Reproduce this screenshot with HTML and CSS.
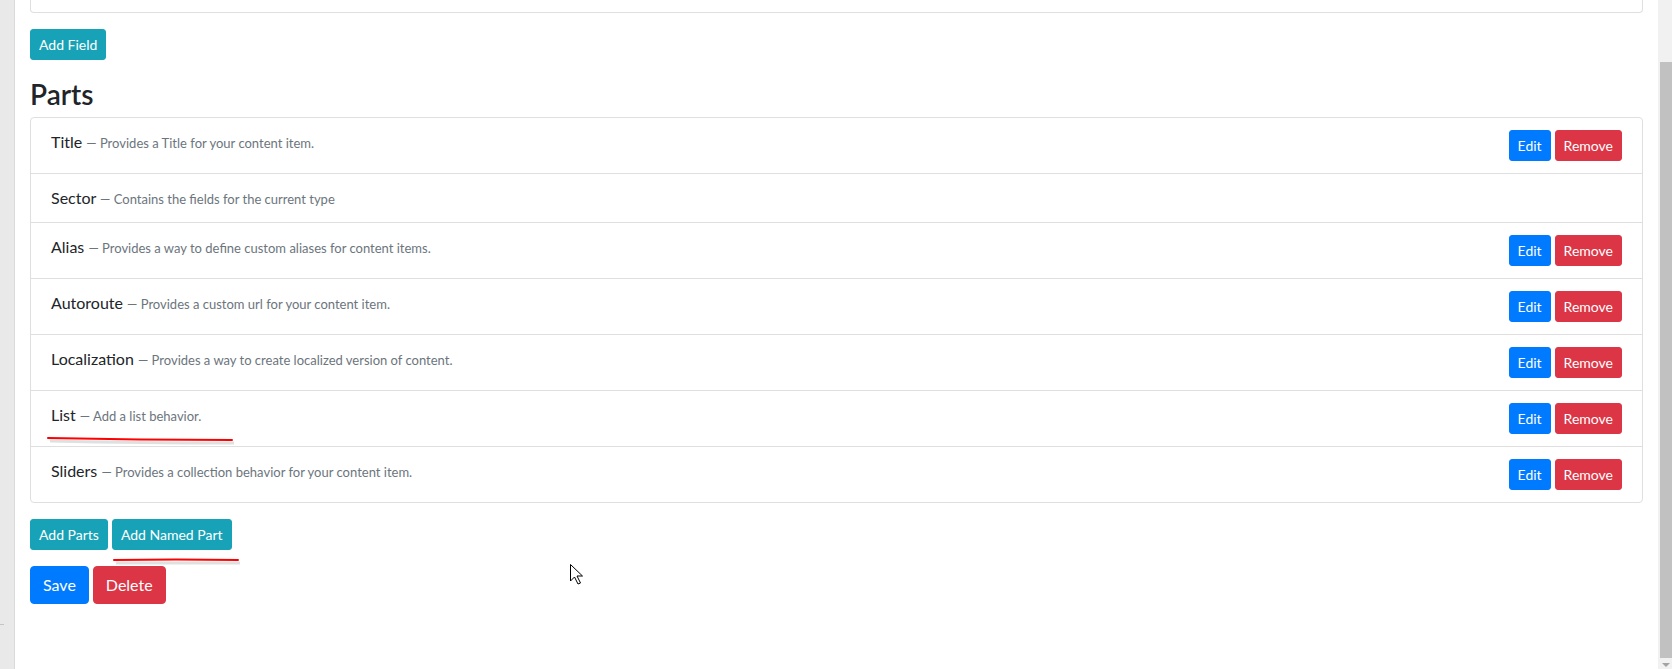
FILE: index.html
```html
<!DOCTYPE html>
<html lang="en">
<head>
    <meta charset="UTF-8">
    <meta name="viewport" content="width=device-width, initial-scale=1.0">
    <title>Edit Content Type</title>
    <link rel="stylesheet" href="styles.css">
</head>
<body>
    <div class="page">
        <div class="side-strip"><span class="tick"></span></div>

        <div class="content">
            <div class="card-cut"></div>

            <button class="btn btn-sm btn-info add-field">Add Field</button>

            <h3>Parts</h3>
            <ul class="list-group">
                <li class="part-row">
                    <div class="part-name">Title <small>— Provides a Title for your content item.</small></div>
                    <div class="part-actions">
                        <button class="btn btn-sm btn-primary">Edit</button>
                        <button class="btn btn-sm btn-danger">Remove</button>
                    </div>
                </li>
                <li class="part-row">
                    <div class="part-name">Sector <small>— Contains the fields for the current type</small></div>
                </li>
                <li class="part-row">
                    <div class="part-name">Alias <small>— Provides a way to define custom aliases for content items.</small></div>
                    <div class="part-actions">
                        <button class="btn btn-sm btn-primary">Edit</button>
                        <button class="btn btn-sm btn-danger">Remove</button>
                    </div>
                </li>
                <li class="part-row">
                    <div class="part-name">Autoroute <small>— Provides a custom url for your content item.</small></div>
                    <div class="part-actions">
                        <button class="btn btn-sm btn-primary">Edit</button>
                        <button class="btn btn-sm btn-danger">Remove</button>
                    </div>
                </li>
                <li class="part-row">
                    <div class="part-name">Localization <small>— Provides a way to create localized version of content.</small></div>
                    <div class="part-actions">
                        <button class="btn btn-sm btn-primary">Edit</button>
                        <button class="btn btn-sm btn-danger">Remove</button>
                    </div>
                </li>
                <li class="part-row">
                    <div class="part-name">List <small>— Add a list behavior.</small></div>
                    <div class="part-actions">
                        <button class="btn btn-sm btn-primary">Edit</button>
                        <button class="btn btn-sm btn-danger">Remove</button>
                    </div>
                </li>
                <li class="part-row">
                    <div class="part-name">Sliders <small>— Provides a collection behavior for your content item.</small></div>
                    <div class="part-actions">
                        <button class="btn btn-sm btn-primary">Edit</button>
                        <button class="btn btn-sm btn-danger">Remove</button>
                    </div>
                </li>
            </ul>

            <div class="actions">
                <button class="btn btn-sm btn-info">Add Parts</button>
                <button class="btn btn-sm btn-info">Add Named Part</button>
            </div>

            <div class="actions">
                <button class="btn btn-primary">Save</button>
                <button class="btn btn-danger">Delete</button>
            </div>
        </div>

        <div class="scrollbar">
            <div class="track-top"></div>
            <div class="thumb"></div>
            <div class="arrow-down"></div>
        </div>

        <!-- hand drawn marks and the mouse pointer from the screenshot -->
        <svg class="overlay" width="1672" height="669" viewBox="0 0 1672 669">
            <path d="M50 441 Q 140 443 234 443" stroke="#000" stroke-opacity="0.12" stroke-width="3" fill="none"/>
            <path d="M48 438 Q 140 440 232 440" stroke="#f00" stroke-width="2" fill="none" stroke-linecap="round"/>
            <path d="M116 563 Q 180 563 240 563" stroke="#000" stroke-opacity="0.12" stroke-width="3" fill="none"/>
            <path d="M114 560 Q 176 559 238 560" stroke="#f00" stroke-width="2" fill="none" stroke-linecap="round"/>
            <path d="M570.5 564.5 L570.5 581 L574.5 577 L578 584 L580.5 583 L577 576 L582.5 576 Z" fill="#fff" stroke="#000" stroke-width="1" stroke-linejoin="round"/>
        </svg>
    </div>
</body>
</html>
```

FILE: styles.css
```css
* {
    margin: 0;
    padding: 0;
    box-sizing: border-box;
}

body {
    font-family: "Lato", "Noto Sans", sans-serif;
    font-size: 16px;
    line-height: 1.5;
    color: #212529;
    background: #fff;
}

.page {
    position: relative;
    display: flex;
    height: 669px;
    overflow: hidden;
}

.side-strip {
    position: relative;
    width: 15px;
    background: #e9e9e9;
    border-right: 1px solid #dadada;
}

.tick {
    position: absolute;
    left: 0;
    top: 624px;
    width: 4px;
    height: 1px;
    background: #c4c4c4;
}

.content {
    flex: 1;
    padding: 0 15px;
}

.card-cut {
    height: 13px;
    border: 1px solid #dfdfdf;
    border-top: none;
    border-radius: 0 0 4px 4px;
}

.btn {
    display: inline-block;
    font-family: inherit;
    font-size: 16px;
    line-height: 24px;
    padding: 6px 12px;
    border: 1px solid transparent;
    border-radius: 4px;
    color: #fff;
    cursor: pointer;
}

.btn-sm {
    font-size: 14px;
    line-height: 21px;
    padding: 4px 8px;
    border-radius: 3px;
}

.btn-info {
    background: #17a2b8;
    border-color: #17a2b8;
}

.btn-primary {
    background: #007bff;
    border-color: #007bff;
}

.btn-danger {
    background: #dc3545;
    border-color: #dc3545;
}

.add-field {
    margin-top: 16px;
}

h3 {
    font-size: 28px;
    font-weight: 600;
    line-height: 34px;
    margin: 17px 0 6px;
}

.list-group {
    list-style: none;
    border: 1px solid #dfdfdf;
    border-radius: 4px;
}

.part-row {
    display: flex;
    justify-content: space-between;
    align-items: flex-start;
    min-height: 49px;
    padding: 12px 20px;
    border-bottom: 1px solid #dfdfdf;
}

.part-row:last-child {
    border-bottom: none;
}

.part-name small {
    font-size: 13px;
    color: #6c757d;
}

.part-actions {
    display: flex;
    gap: 4px;
}

.actions {
    display: flex;
    gap: 4px;
    margin-top: 16px;
}

.scrollbar {
    width: 14px;
    display: flex;
    flex-direction: column;
    background: #f1f1f1;
}

.track-top {
    height: 62px;
}

.thumb {
    flex: 1;
    margin-left: 2px;
    background: #c1c1c1;
}

.arrow-down {
    position: relative;
    height: 11px;
}

.arrow-down::after {
    content: '';
    position: absolute;
    left: 4px;
    top: 5px;
    border-left: 4px solid transparent;
    border-right: 4px solid transparent;
    border-top: 4px solid #a3a3a3;
}

.overlay {
    position: absolute;
    left: 0;
    top: 0;
    pointer-events: none;
}
```
